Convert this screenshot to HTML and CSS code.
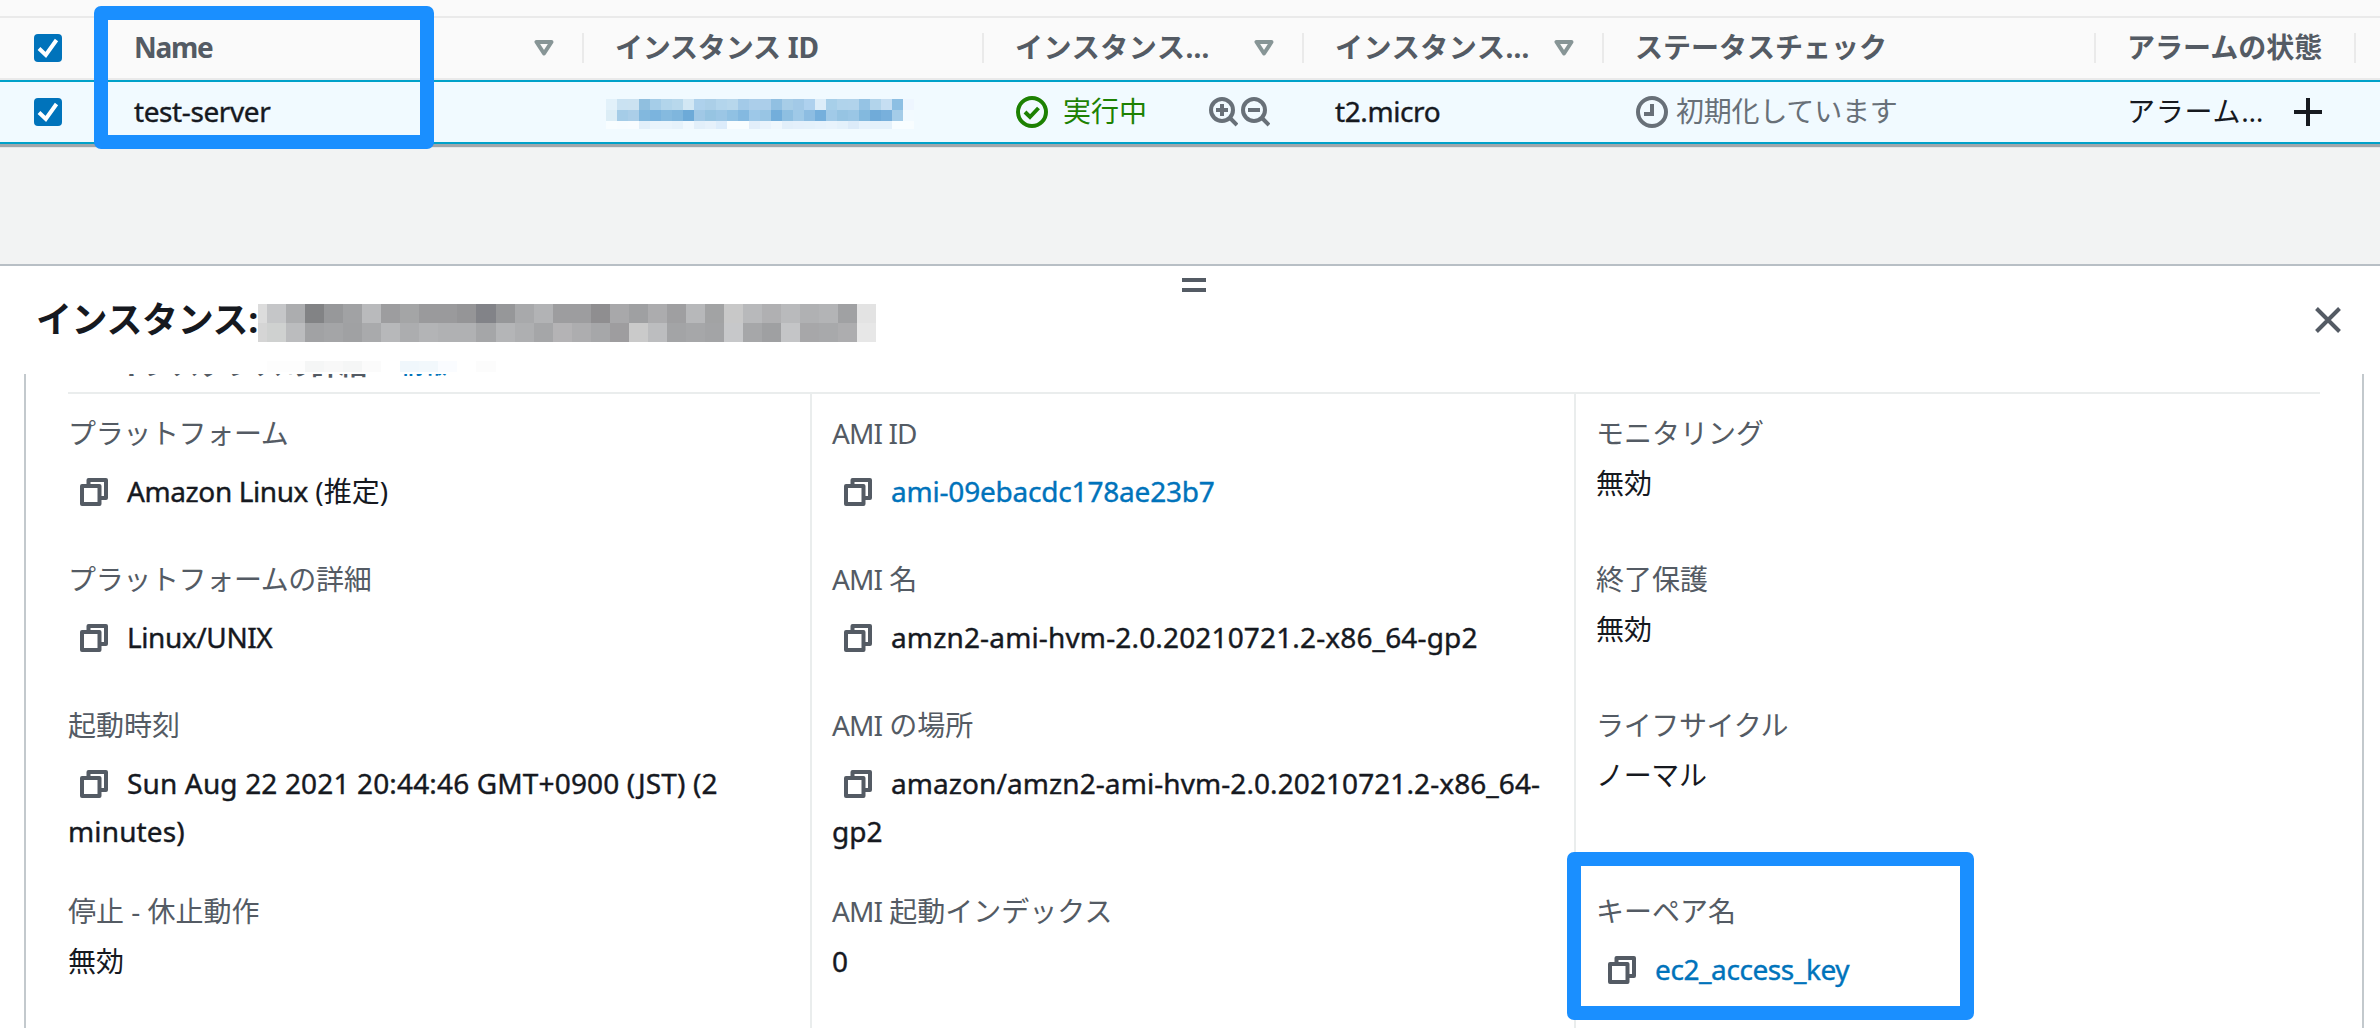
FILE: index.html
```html
<!DOCTYPE html>
<html lang="ja">
<head>
<meta charset="utf-8">
<title>インスタンス</title>
<link rel="stylesheet" href="styles.css">
</head>
<body>
<svg class="defs" width="0" height="0" aria-hidden="true">
  <symbol id="copy" viewBox="0 0 28 28">
    <path d="M8.500 8V2H26v18h-5.500" fill="none" stroke="#545b64" stroke-width="4" stroke-linejoin="round"/>
    <path d="M2 8h17.500v18H2z" fill="#fff" stroke="#545b64" stroke-width="4" stroke-linejoin="round"/>
  </symbol>
  <symbol id="check" viewBox="0 0 28 28">
    <rect width="28" height="28" rx="4" fill="#0073bb"/>
    <path d="M5 14.500l6.800 6.500L22.500 6" fill="none" stroke="#fff" stroke-width="4"/>
  </symbol>
  <symbol id="sort" viewBox="0 0 20 16">
    <path d="M2.500 2h15L10 13.500z" fill="none" stroke="#879596" stroke-width="4" stroke-linejoin="round"/>
  </symbol>
</svg>

<div class="page">
  <section class="table">
    <div class="row head">
      <div class="cell pick"><svg class="box"><use href="#check"/></svg></div>
      <div class="cell name"><span class="t-name">Name</span><svg class="sort"><use href="#sort"/></svg></div>
      <div class="cell"><span class="t-id">インスタンス ID</span></div>
      <div class="cell"><span class="cut">インスタンス…</span><svg class="sort"><use href="#sort"/></svg></div>
      <div class="cell"><span class="cut">インスタンス…</span><svg class="sort"><use href="#sort"/></svg></div>
      <div class="cell"><span>ステータスチェック</span></div>
      <div class="cell"><span>アラームの状態</span></div>
    </div>
    <div class="row body">
      <div class="cell pick"><svg class="box"><use href="#check"/></svg></div>
      <div class="cell name"><span class="tight">test-server</span></div>
      <div class="cell masked"><svg class="mosaic-id" id="mosaic-id" width="308" height="32"></svg></div>
      <div class="cell state">
        <svg width="32" height="32" viewBox="0 0 32 32" fill="none" stroke="#1d8102" stroke-width="4"><circle cx="16" cy="16" r="14"/><path d="M9 16l5 5 8.500-9"/></svg>
        <span class="running">実行中</span>
        <svg class="zoom" width="29" height="30" viewBox="0 0 29 30" fill="none" stroke="#687078" stroke-width="4"><circle cx="13" cy="13" r="11"/><path d="M21 21l7 7M7 13h12M13 7v12"/></svg>
        <svg class="zoom out" width="29" height="30" viewBox="0 0 29 30" fill="none" stroke="#687078" stroke-width="4"><circle cx="13" cy="13" r="11"/><path d="M21 21l7 7M7 13h12"/></svg>
      </div>
      <div class="cell"><span class="tight">t2.micro</span></div>
      <div class="cell pending">
        <svg width="32" height="32" viewBox="0 0 32 32" fill="none" stroke="#687078" stroke-width="4"><circle cx="16" cy="16" r="14"/><path d="M16 8v10H8"/></svg>
        <span>初期化しています</span>
      </div>
      <div class="cell alarm"><span>アラーム…</span>
        <svg width="28" height="28" viewBox="0 0 28 28" stroke="#16191f" stroke-width="4"><path d="M0 14h28M14 0v28"/></svg>
      </div>
    </div>
    <div class="mark mark-name"></div>
  </section>

  <section class="panel">
    <div class="handle"><i></i><i></i></div>
    <header class="title">
      <h1>インスタンス:</h1>
      <svg class="mosaic-title" id="mosaic-title" width="620" height="68"></svg>
      <svg class="close" width="26" height="26" viewBox="0 0 26 26" stroke="#545b64" stroke-width="4"><path d="M1.500 1.500l23 23M24.500 1.500l-23 23"/></svg>
    </header>
    <div class="details">
      <h2><span>インスタンスの詳細</span><a>情報</a></h2>
      <div class="grid">
        <div class="item"><label class="kana">プラットフォーム</label><p class="copy"><svg><use href="#copy"/></svg><span class="tight">Amazon Linux</span> (推定)</p></div>
        <div class="item"><label class="id">AMI ID</label><p class="copy"><svg><use href="#copy"/></svg><a class="ami">ami-09ebacdc178ae23b7</a></p></div>
        <div class="item"><label>モニタリング</label><p>無効</p></div>

        <div class="item"><label class="kana">プラットフォームの詳細</label><p class="copy"><svg><use href="#copy"/></svg><span class="unix">Linux/UNIX</span></p></div>
        <div class="item"><label><span class="id">AMI</span> 名</label><p class="copy wide"><svg><use href="#copy"/></svg>amzn2-ami-hvm-2.0.20210721.2-x86_64-gp2</p></div>
        <div class="item"><label>終了保護</label><p>無効</p></div>

        <div class="item"><label>起動時刻</label><p class="copy wide"><svg><use href="#copy"/></svg>Sun Aug 22 2021 20:44:46 GMT+0900 (JST) (2 minutes)</p></div>
        <div class="item"><label><span class="id">AMI</span> の場所</label><p class="copy path"><svg><use href="#copy"/></svg>amazon/amzn2-ami-hvm-2.0.20210721.2-x86_64-gp2</p></div>
        <div class="item"><label class="kana">ライフサイクル</label><p class="kana">ノーマル</p></div>

        <div class="item"><label>停止 - 休止動作</label><p>無効</p></div>
        <div class="item"><label><span class="id">AMI</span> 起動インデックス</label><p class="path">0</p></div>
        <div class="item keypair"><label>キーペア名</label><p class="copy"><svg><use href="#copy"/></svg><a class="key">ec2_access_key</a></p><div class="mark mark-key"></div></div>
      </div>
    </div>
  </section>
</div>
<script src="mosaic.js"></script>
</body>
</html>
```
FILE: styles.css
```css
* { box-sizing: border-box; }
body {
  margin: 0;
  font-family: "Noto Sans", "Noto Sans CJK JP", sans-serif;
  font-size: 28px;
  color: #16191f;
  background: #f2f3f3;
}
.defs { position: absolute; }
svg { display: block; flex: none; }
a { color: #0073bb; }
.page { display: flex; flex-direction: column; height: 1028px; overflow: hidden; }

/* Instance table */
.table { position: relative; background: #fafafa; padding-top: 16px; box-shadow: 0 1px 1px 2px #a0a6ab; }
.row { display: grid; grid-template-columns: 103px 482px 400px 320px 300px 492px 260px; white-space: nowrap; }
.cell { display: flex; align-items: center; padding-left: 30px; line-height: 40px; }
.cell span { margin-top: -2px; }
.head { height: 64px; border-top: 2px solid #eaeaea; border-bottom: 2px solid #eaeaea; font-weight: 700; color: #545b64; }
.head .cell { position: relative; justify-content: space-between; padding-right: 31px; }
.head .cell:not(.pick)::after { content: ""; position: absolute; right: 1px; top: 15px; width: 2px; height: 30px; background: #eaeaea; }
.cell.name { padding-left: 31px; }
.body { height: 64px; border-top: 2px solid #00a1c9; border-bottom: 2px solid #00a1c9; background: #f1faff; }
.cell.pick { padding: 0 0 0 34px; }
.box { width: 28px; height: 28px; }
.sort { width: 20px; height: 16px; }
.t-name { letter-spacing: -1.3px; }
.t-id { letter-spacing: -.2px; }
.cut { letter-spacing: .6px; }
.tight { letter-spacing: -.4px; }
.cell.masked { padding-left: 21px; align-items: flex-start; padding-top: 17px; }
.state svg:first-child { margin-left: 1px; }
.running { color: #1d8102; margin-left: 15px; width: 84px; }
.zoom { margin-left: 62px; }
.zoom.out { margin-left: 3px; }
.pending { color: #687078; gap: 8px; letter-spacing: -.2px; }
.pending svg { margin-left: 1px; }
.alarm span { width: 139px; letter-spacing: .8px; }
.alarm svg { margin-left: 28px; }

/* Annotation frames */
.mark { position: absolute; border: 14px solid #1a8fff; border-radius: 7px; }
.mark-name { left: 94px; top: 6px; width: 340px; height: 143px; }
.mark-key { left: -9px; top: -20px; width: 407px; height: 168px; }

/* Split panel */
.panel { margin-top: 120px; flex: 1; background: #fff; border-top: 2px solid #b8bfc5; padding-top: 12px; }
.handle { display: flex; flex-direction: column; align-items: center; gap: 6px; padding-left: 8px; }
.handle i { width: 24px; height: 4px; background: #545b64; }
.title { display: flex; align-items: center; height: 82px; padding: 0 39px 26px 36px; }
.title h1 { margin: 0; width: 222px; font-size: 36px; line-height: 56px; white-space: nowrap; letter-spacing: -.4px; }
.mosaic-title { align-self: flex-start; margin-top: 12px; }
.close { margin-left: auto; }

.details { margin: 0 16px 0 24px; height: 654px; overflow: hidden; padding: 0 42px; border: solid #c3c9cd; border-width: 0 2px; }
h2 { display: flex; gap: 34px; margin: -28px 0 0; height: 46px; padding-left: 13px; font-size: 28px; line-height: 36px; color: #545b64; white-space: nowrap; }
h2 span { width: 286px; text-align: right; }
h2 a { font-size: 23px; }
.grid { display: grid; grid-template-columns: 742px 764px 746px; grid-template-rows: 146px 146px 186px 156px; border-top: 2px solid #eaeded; }
.item { padding: 15px 20px 0 0; line-height: 48px; }
.item:not(:nth-child(3n+1)) { border-left: 2px solid #eaeded; padding-left: 20px; }
label { display: block; color: #545b64; }
.item p { margin: 2px 0 0; }
.item p.copy { margin-top: 10px; }
.copy svg { display: inline-block; width: 28px; height: 28px; margin: 0 19px 0 12px; vertical-align: -4px; }
.kana { letter-spacing: -.35px; }
.id { letter-spacing: -.9px; }
.unix { letter-spacing: -.4px; }
.wide { letter-spacing: .15px; }
.path { letter-spacing: .08px; }
.ami { letter-spacing: -.2px; }
.key { letter-spacing: -.4px; }
/* Latin values carry slightly heavier stems than the kana around them */
.body .tight, .item .tight, .unix, .wide, .path, .ami, .key { -webkit-text-stroke: .4px currentColor; }
.keypair { position: relative; }
```
FILE: mosaic.js
```js
// Pixelated redaction blocks: each row is [y, height, firstX, cell width, colours].
function draw(id, rows) {
  const svg = document.getElementById(id);
  for (const [y, h, x0, w, colours] of rows) {
    colours.split(" ").forEach((c, i) => {
      if (c === "-") return;
      const r = document.createElementNS("http://www.w3.org/2000/svg", "rect");
      const x = x0 + i * w;
      const left = Math.max(0, x);
      r.setAttribute("x", left);
      r.setAttribute("y", y);
      r.setAttribute("width", x + w - left);
      r.setAttribute("height", h);
      r.setAttribute("fill", "#" + c);
      r.setAttribute("shape-rendering", "crispEdges");
      svg.appendChild(r);
    });
  }
}
draw("mosaic-id", [
  [0, 11, 0, 11, "e2f1fa cae2f2 cbe2f1 90bfdf a5cde8 b2d5eb b8d8ec d2e7f4 aed1ec abcfe8 b3d5ec b7d7ec a3cae8 abceea abceea 91c0e2 a7cde7 a2c9e7 aed1ee dcedf9 a7cfe9 b0d3eb b1d3eb 95c3e4 b2d4eb c6def2 8dbfe3 eef6ff"],
  [11, 11, 0, 11, "dcedf6 a5cce7 abcee8 82b8de 7bb4de 85badf 7fb6dd 6daad8 a0c8e6 96c4e2 9bc6e5 90c1e3 84b9e0 9dc8e8 98c5e4 73aedb 8ebfe1 9fc9e7 8dbde2 75afdc a1cae8 96c4e3 9ac6e5 83b9de 70abd9 78b0dc a4cce8 f2faff"],
  [22, 8, 0, 11, "f8fdff f7fcff f8fcff e2effa e9f4fc e9f4fc e6f2fb f0f8fe e2effa e6f1fb dcecfb f8fdff f8fdff e2eefa e9f3fc eff7fd e2effa e4f0fb e4f1fb e6f2fc e8f3fc e4f1fb dcebf9 e6f2fc e4f1fb e4f1fb f8fdff f8fdff"]
]);
draw("mosaic-title", [
  [0, 19, -10, 19.04, "dcdcdc c5c6c8 acadaf 828385 97989a a1a2a4 b9babc 9d9d9f a4a5a6 9a9a9c 9a9a9c 959597 828388 969799 a8a9ab b2b3b5 9d9d9f 9d9d9f 8f8e90 a8a8aa 9fa0a2 acacae 9f9fa1 b7b8ba a2a3a4 c8c8c8 b8b9bb b0b0b2 b9babc b0b1b3 b3b4b6 a0a1a3 e3e3e3"],
  [19, 19, -10, 19.04, "d5d5d5 cfd1d0 bbbcbe a1a2a4 a4a5a7 a0a1a3 a9aaac b7b8ba acadaf b3b4b6 b0b1b3 b0b1b3 a5a6a8 b4b5b7 aeafb1 a5a6a8 b4b3b5 adadaf a6a7a9 9e9d9f cacaca bcbdbf a3a4a6 a6a7a9 a3a4a6 c7c8ca a6a7a9 9fa0a2 c4c5c7 a7a7a9 a8a9ab adadaf e7e7e7"],
  [57, 11, -10, 19.04, "- fdfdfd fdfdfd f5f6f6 f8f8f8 f5f6f6 fbfbfb - f0f7fc f2f8fc fafcff - fcfcfc"]
]);
```
